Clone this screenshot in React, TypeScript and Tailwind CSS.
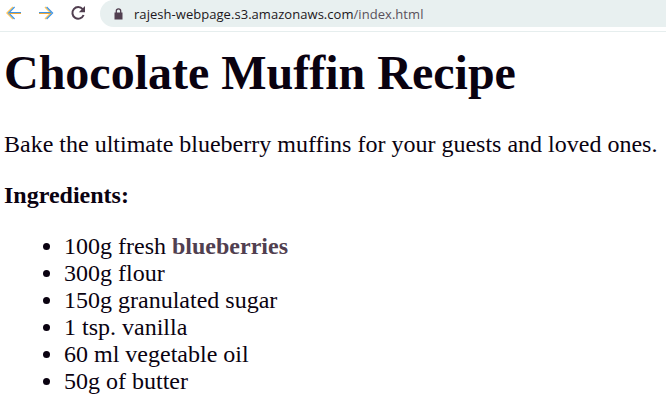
const ingredients = ["300g flour", "150g granulated sugar", "1 tsp. vanilla", "60 ml vegetable oil", "50g of butter"];

function Arrow({ head, shaft }: { head: string; shaft: string }) {
  return (
    <svg width="16" height="16" viewBox="0 0 16 16" fill="none" strokeWidth="1.2">
      <path d={head} stroke="#ffc65c" strokeWidth="1.5" transform="translate(-1 0)" />
      <path d={head} stroke="#3f95e6" transform="translate(.6 0)" />
      <path d={shaft} stroke="#f0a838" strokeWidth="1" transform="translate(0 .5)" />
      <path d={shaft} stroke="#3f95e6" strokeWidth="1" transform="translate(0 -.5)" />
    </svg>
  );
}

function BrowserBar() {
  return (
    <header className="flex h-8 items-start border-b border-[#e6eeee] bg-white pl-[6px]">
      <div className="flex h-[26px] items-center">
        <Arrow head="M8 2 2 8l6 6" shaft="M3 8h12" />
        <span className="w-4" />
        <Arrow head="M8 2l6 6-6 6" shaft="M1 8h12" />
        <svg className="ml-[16px]" width="16" height="16" viewBox="0 0 16 16" fill="none" stroke="#513f50" strokeWidth="2">
          <path d="M12.700 4.200A5.800 5.800 0 1 0 13.600 10" />
          <path d="M15 1v6.200H8.800z" fill="#513f50" stroke="none" />
        </svg>
      </div>
      <div className="ml-[14px] flex h-[27px] flex-1 items-center rounded-l-full bg-[#e8f0f0] pl-[14px]">
        <svg width="9" height="12" viewBox="0 0 9 12">
          <path d="M.5 4.500h8v7h-8z" fill="#513f50" />
          <path d="M2.300 5V3a2.200 2.200 0 0 1 4.400 0v2" fill="none" stroke="#513f50" strokeWidth="1.300" />
        </svg>
        <span className="ml-[11px] whitespace-nowrap font-['Open_Sans',sans-serif] text-[13px] leading-4 tracking-[0.045px] text-[#1c1720]">
          rajesh-webpage.s3.amazonaws.com<span className="text-[#5a505c]">/index.html</span>
        </span>
      </div>
    </header>
  );
}

export default function App() {
  return (
    <div className="h-[402px] w-[666px] overflow-hidden bg-white">
      <BrowserBar />
      <main className="pl-1 font-['Liberation_Serif',serif] text-[24px] leading-[27px] text-[#0a0210]">
        <h1 className="pt-[13px] text-[48px] leading-[55px] font-bold">Chocolate Muffin Recipe</h1>
        <p className="mt-[31px] whitespace-nowrap">Bake the ultimate blueberry muffins for your guests and loved ones.</p>
        <p className="mt-[24px] font-bold">Ingredients:</p>
        <ul className="mt-[24px] list-disc pl-[60px]">
          <li>100g fresh <strong className="text-[#513f50]">blueberries</strong></li>
          {ingredients.map((item) => <li key={item}>{item}</li>)}
        </ul>
      </main>
    </div>
  );
}
